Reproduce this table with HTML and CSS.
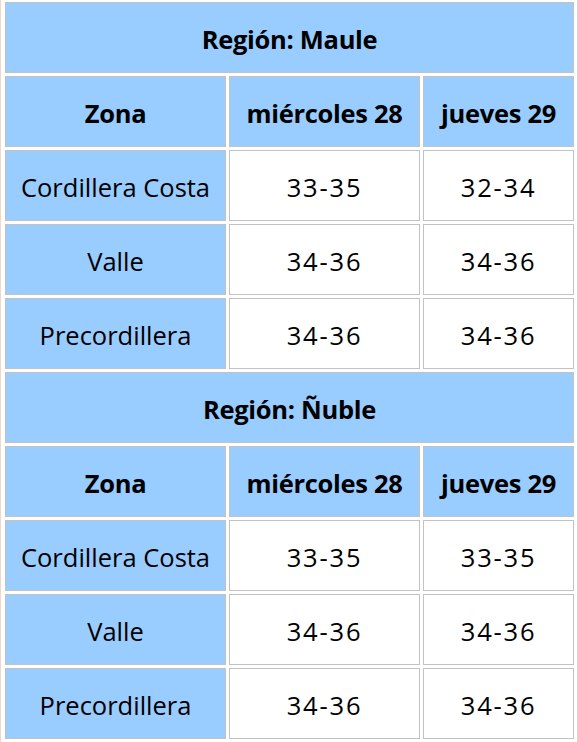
FILE: index.html
```html
<!doctype html>
<html>
<head>
    <meta charset="UTF-8">
    <link rel="stylesheet" href="styles.css">
</head>
<body>
<div class="wrap">
    <table class="clima">
        <colgroup>
            <col class="c-zona">
            <col class="c-dia1">
            <col class="c-dia2">
        </colgroup>
        <tr>
            <th colspan="3" class="region">Región: Maule</th>
        </tr>
        <tr>
            <th>Zona</th>
            <th>miércoles 28</th>
            <th>jueves 29</th>
        </tr>
        <tr>
            <td class="zona">Cordillera Costa</td>
            <td>33-35</td>
            <td>32-34</td>
        </tr>
        <tr>
            <td class="zona">Valle</td>
            <td>34-36</td>
            <td>34-36</td>
        </tr>
        <tr>
            <td class="zona">Precordillera</td>
            <td>34-36</td>
            <td>34-36</td>
        </tr>
        <tr>
            <th colspan="3" class="region">Región: Ñuble</th>
        </tr>
        <tr>
            <th>Zona</th>
            <th>miércoles 28</th>
            <th>jueves 29</th>
        </tr>
        <tr>
            <td class="zona">Cordillera Costa</td>
            <td>33-35</td>
            <td>33-35</td>
        </tr>
        <tr>
            <td class="zona">Valle</td>
            <td>34-36</td>
            <td>34-36</td>
        </tr>
        <tr>
            <td class="zona">Precordillera</td>
            <td>34-36</td>
            <td>34-36</td>
        </tr>
    </table>
</div>
</body>
</html>
```

FILE: styles.css
```css
body {
    margin: 0;
    background-color: #fff;
}

.wrap {
    border-left: 1px solid #eed8c8;
    padding-left: 1px;
    margin-top: -1px;
}

.clima {
    border-collapse: separate;
    border-spacing: 3px;
    table-layout: fixed;
    width: 575px;
    font-family: "Open Sans", "Noto Sans", sans-serif;
    font-size: 25.5px;
    color: #000;
}

.c-zona {
    width: 221px;
}

.c-dia1 {
    width: 191px;
}

.c-dia2 {
    width: 151px;
}

.clima th,
.clima td {
    border: 1px solid #c2c2c2;
    height: 71px;
    padding: 2px 0 0;
    text-align: center;
    vertical-align: middle;
    box-sizing: border-box;
}

.clima th {
    background-color: #99ccff;
    font-weight: bold;
    letter-spacing: -0.3px;
}

.clima td {
    background-color: #fff;
    letter-spacing: 1.8px;
}

.clima td.zona {
    background-color: #99ccff;
    letter-spacing: 0;
}
```
